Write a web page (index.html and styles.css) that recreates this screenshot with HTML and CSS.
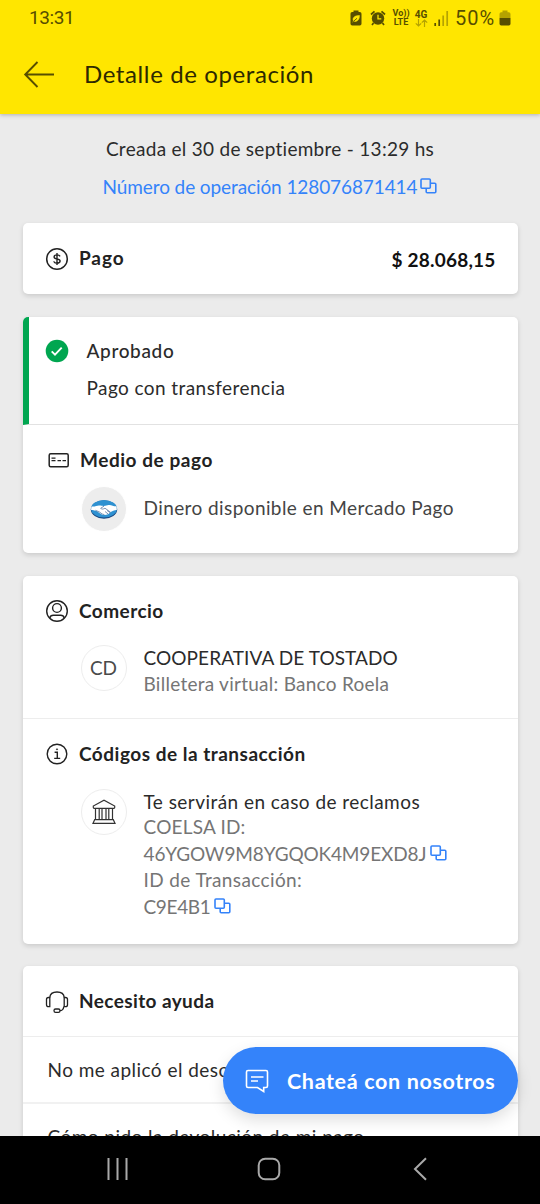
FILE: index.html
```html
<!DOCTYPE html>
<html lang="es">
<head>
<meta charset="utf-8">
<title>Detalle de operación</title>
<link rel="stylesheet" href="styles.css">
</head>
<body>
<svg class="defs" width="0" height="0" aria-hidden="true">
  <symbol id="copy" viewBox="0 0 17 16"><path d="M2 1h7.300q1 0 1 1v7.300q0 1-1 1H2q-1 0-1-1V2q0-1 1-1zM10.300 5.200h4.500q1 0 1 1v7.600q0 1-1 1H7.200q-1 0-1-1v-3.500" fill="none" stroke="currentColor" stroke-width="1.600"/></symbol>
</svg>
<div class="screen">
  <header class="header">
    <div class="status">
      <span class="clock">13:31</span>
      <div class="status-icons">
        <svg class="i-saver" width="12" height="16" viewBox="0 0 12 16"><path d="M3.500 0.500h5v1.600h1.300q1.700 0 1.700 1.700v10q0 1.700-1.700 1.700H2.200q-1.700 0-1.700-1.700v-10q0-1.700 1.700-1.700h1.300z" fill="#574e00"/><path d="M9.500 5.500c-4 0-6.500 1.500-6.500 4q0 2 2 2c2.800 0 4.500-2.500 4.500-6zM2.300 12.200l4-3.700" fill="#ffe600" stroke="#ffe600" stroke-width=".5"/><path d="M3.500 11.300l3.500-3" stroke="#574e00" stroke-width=".9"/></svg>
        <svg class="i-alarm" width="16" height="16" viewBox="0 0 16 16"><circle cx="8" cy="8.500" r="6.200" fill="#574e00"/><path d="M1 4.500L4.500 1.300M15 4.500L11.500 1.300M3.500 13l-1.500 2M12.500 13l1.500 2" stroke="#574e00" stroke-width="1.700"/><path d="M8 4.800v4h3.300" fill="none" stroke="#ffe600" stroke-width="1.300"/></svg>
        <div class="net i-volte"><span>Vo))</span><span>LTE</span></div>
        <div class="net i-4g"><span>4G</span><svg width="13" height="8" viewBox="0 0 13 8"><path d="M3.500 0v7M.8 4.300l2.700 2.700 2.700-2.700M9.500 8V1M6.800 3.700L9.500 1l2.700 2.700" fill="none" stroke="#b5a300" stroke-width="1.200"/></svg></div>
        <svg class="i-signal" width="15" height="15" viewBox="0 0 15 15"><path d="M1.200 12v3M5.200 8.500V15" stroke="#574e00" stroke-width="1.700"/><path d="M9.200 4.500V15M13.200 0v15" stroke="#b5a300" stroke-width="1.700"/></svg>
        <span class="percent">50%</span>
        <svg class="i-battery" width="12" height="16" viewBox="0 0 12 16"><path d="M3.500.5h5v1.700h1.300q1.700 0 1.700 1.700V8H.5V3.900q0-1.700 1.700-1.700h1.300z" fill="#b5a300"/><path d="M.5 8h11v5.800q0 1.700-1.700 1.700H2.200Q.5 15.500.5 13.800z" fill="#574e00"/></svg>
      </div>
    </div>
    <div class="titlebar">
      <svg class="back" width="32" height="28" viewBox="0 0 32 28"><path d="M14.500 2L2.200 14.500 14.500 27M2.200 14.500H31" fill="none" stroke="#574e00" stroke-width="1.900"/></svg>
      <h1>Detalle de operación</h1>
    </div>
  </header>

  <main class="content">
    <div class="intro">
      <p class="created">Creada el 30 de septiembre - 13:29 hs</p>
      <p class="number"><span>Número de operación 128076871414</span><svg class="copy" width="17" height="16"><use href="#copy"/></svg></p>
    </div>

    <section class="card payment">
      <svg class="icon" width="24" height="24" viewBox="0 0 24 24" fill="none" stroke="#222"><circle cx="12" cy="12" r="10.300" stroke-width="1.500"/><path d="M15.100 9.400c-.5-1-1.600-1.500-3.100-1.500-1.700 0-2.900.7-2.900 2 0 3 6 1.100 6 4.200 0 1.300-1.300 2.100-3.100 2.100-1.600 0-2.900-.6-3.300-1.800M12 6v12" stroke-width="1.400"/></svg>
      <h2 class="pago">Pago</h2>
      <strong class="amount">$ 28.068,15</strong>
    </section>

    <section class="card status-card">
      <div class="approved">
        <svg class="icon" width="24" height="24" viewBox="0 0 24 24"><circle cx="12" cy="12" r="11.300" fill="#00a650"/><path d="M6.700 12.300l3.300 3.300 6.700-6.900" fill="none" stroke="#fff" stroke-width="1.900"/></svg>
        <div class="approved-text">
          <p class="state">Aprobado</p>
          <p class="transfer">Pago con transferencia</p>
        </div>
      </div>
      <div class="method">
        <div class="heading">
          <svg class="icon" width="24" height="24" viewBox="0 0 24 24" fill="none" stroke="#222" stroke-width="1.500"><rect x="4.200" y="5.700" width="19" height="13" rx="1.500"/><path d="M6.500 10.100h4M6.500 12.700h4M12.500 12.700h3.500M17.500 12.700h3.500" stroke-width="1.300"/></svg>
          <h2 class="medio">Medio de pago</h2>
        </div>
        <div class="detail">
          <div class="avatar grey"><svg width="28" height="20" viewBox="0 0 28 20"><ellipse cx="14" cy="10.500" rx="13.200" ry="9.200" fill="#17457f"/><ellipse cx="14" cy="9.800" rx="12.900" ry="8.800" fill="#2e91d1"/><path d="M1.400 7.400c3 .6 5.300-.7 7.500-.9 2.200-.1 3.200.5 5 .4 2.100-.1 3.400-1.200 5.500-.9 2.500.4 4.700 1.600 7.200 1.300l.2 3.600c-2.600.4-4.800 1.100-6.200 2.100-1.500 2-3.300 3-6.200 3-3.200 0-4.600-2.100-7-3.500-1.900-1-4.100-1.500-6.300-1.500z" fill="#fff"/><path d="M14 7.200l-3.300 2c.6 1.400 2.500 1 4.300 0l5.500 4M12.500 15l2 .8M15 12.500l3 2.400M17 11.400l3 2.300M5.500 11.300l3.500 1.500M9 12.700l3.500 2.500" fill="none" stroke="#476a99" stroke-width=".7"/></svg></div>
          <p class="dinero">Dinero disponible en Mercado Pago</p>
        </div>
      </div>
    </section>

    <section class="card">
      <div class="store">
        <div class="heading">
          <svg class="icon" width="24" height="24" viewBox="0 0 24 24" fill="none" stroke="#222" stroke-width="1.400"><circle cx="12" cy="12" r="10.300"/><circle cx="12" cy="9" r="4.400"/><path d="M4.800 19c.4-1.800 1.500-2.700 3.500-2.700h7.400c2 0 3.100.9 3.500 2.700"/></svg>
          <h2 class="comercio">Comercio</h2>
        </div>
        <div class="detail">
          <div class="avatar">CD</div>
          <div class="store-text">
            <p class="coop">COOPERATIVA DE TOSTADO</p>
            <p class="muted wallet">Billetera virtual: Banco Roela</p>
          </div>
        </div>
      </div>
      <div class="codes">
        <div class="heading">
          <svg class="icon" width="24" height="24" viewBox="0 0 24 24" fill="none" stroke="#222" stroke-width="1.400"><circle cx="12" cy="12" r="9.800"/><path d="M9.600 10.200H12.300V16M9.200 16.400h6"/><circle cx="12" cy="7.300" r=".6" fill="#222" stroke-width=".7"/></svg>
          <h2 class="codigos">Códigos de la transacción</h2>
        </div>
        <div class="detail">
          <div class="avatar"><svg width="24" height="26" viewBox="0 0 24 26" fill="none" stroke="#333" stroke-width="1.200"><path d="M1.300 8.500V7L12 1.300 22.700 7v1.500q0 .8-.8.8H2.100q-.8 0-.8-.8zM3.500 9.300v11.400M7.200 9.300v11.400M10 9.300v11.400M14 9.300v11.400M16.800 9.300v11.400M20.500 9.300v11.400M2.700 20.700h18.600L23 24.300H1z"/></svg></div>
          <div class="codes-text">
            <p class="claims">Te servirán en caso de reclamos</p>
            <p class="muted coelsa">COELSA ID:</p>
            <p class="muted code"><span>46YGOW9M8YGQOK4M9EXD8J</span><svg class="copy" width="17" height="16"><use href="#copy"/></svg></p>
            <p class="muted trans">ID de Transacción:</p>
            <p class="muted short"><span>C9E4B1</span><svg class="copy" width="17" height="16"><use href="#copy"/></svg></p>
          </div>
        </div>
      </div>
    </section>

    <section class="card help">
      <div class="help-head">
        <svg class="icon" width="24" height="24" viewBox="0 0 24 24" fill="none" stroke="#222" stroke-width="1.300"><path d="M4.800 8.500C5 5 8 3 12 3s7 2 7.200 5.500M18.800 17.500c-.3 2.700-1.800 4.200-4 4.200"/><path d="M4.800 8.500v9.200H3.500q-2 0-2-2V10.500q0-2 2-2zM19.200 8.500v9.200h1.300q2 0 2-2V10.500q0-2-2-2z"/><rect x="9" y="20" width="6" height="3.300" rx="1.600"/></svg>
        <h2 class="ayuda">Necesito ayuda</h2>
      </div>
      <p class="question">No me aplicó el descuento</p>
      <p class="question">Cómo pido la devolución de mi pago</p>
    </section>
  </main>

  <div class="chat">
    <svg width="24" height="24" viewBox="0 0 24 24" fill="none" stroke="#fff" stroke-width="1.600"><path d="M3 1.500h18q1.500 0 1.500 1.500v14q0 1.500-1.500 1.500h-2.300v4l-6.200-4H3Q1.500 18.500 1.500 17V3Q1.500 1.500 3 1.500zM6 8h12.500M6 12h7"/></svg>
    <span>Chateá con nosotros</span>
  </div>

  <nav class="nav">
    <svg width="24" height="24" viewBox="0 0 24 24"><path d="M3.500 1v22M12.500 1v22M21.500 1v22" stroke="#a9a9a9" stroke-width="2"/></svg>
    <svg width="24" height="24" viewBox="0 0 24 24"><rect x="1.700" y="1.700" width="20.600" height="20.600" rx="6.500" fill="none" stroke="#a9a9a9" stroke-width="2"/></svg>
    <svg width="24" height="24" viewBox="0 0 24 24"><path d="M18 1.200L7 12l11 10.800" fill="none" stroke="#a9a9a9" stroke-width="2"/></svg>
  </nav>
</div>
</body>
</html>
```

FILE: styles.css
```css
* { box-sizing: border-box; margin: 0; padding: 0; }
body { background: #000; font-family: Lato, "Open Sans", sans-serif; font-size: 19px; line-height: 26px; color: #2b2b2b; }
svg { display: block; flex: none; }
.defs { position: absolute; }
p, h1, h2, span, strong { white-space: nowrap; }
.screen { position: relative; width: 540px; height: 1204px; overflow: hidden; display: flex; flex-direction: column; }

.header { flex: none; height: 114px; background: #ffe600; box-shadow: 0 1px 4px rgba(0,0,0,.25); z-index: 1; }
.status { height: 36px; padding: 0 29px 0 29px; display: flex; justify-content: space-between; align-items: center; color: #574e00; font-family: Roboto, sans-serif; }
.clock { font-size: 19px; font-weight: 400; letter-spacing: -.4px; }
.status-icons { display: flex; align-items: center; }
.i-alarm { margin-left: 8px; }
.net { display: flex; flex-direction: column; align-items: center; font-size: 9px; font-weight: 700; line-height: 9px; }
.i-volte { width: 16px; margin-left: 7px; }
.i-volte span { height: 9px; }
.i-4g { width: 14px; margin-left: 5px; font-size: 10px; }
.i-signal { margin-left: 6px; }
.percent { width: 44px; margin-left: 6px; font-size: 20px; font-weight: 400; letter-spacing: 1px; }
.i-battery { margin-left: 0; }
.titlebar { height: 75px; padding-left: 23px; display: flex; align-items: center; }
h1 { margin-left: 29px; font-size: 24px; font-weight: 400; letter-spacing: .6px; color: #2d2900; }

.content { flex: 1; min-height: 0; overflow: hidden; padding: 22px 22.500px 0 22.500px; background: #ebebeb; }
.intro { display: flex; flex-direction: column; align-items: center; gap: 12px; height: 87px; }
.created { letter-spacing: .28px; }
.number { display: flex; color: #3483fa; letter-spacing: -.1px; }
.copy { margin: 4px 0 0 4px; color: #3483fa; }
.number .copy { margin-left: 3px; }
.card { margin-bottom: 22px; border-radius: 5px; background: #fff; box-shadow: 0 2px 5px rgba(0,0,0,.14); }
h2 { margin-left: 10.500px; font-size: 19px; font-weight: 700; color: #222; }
.payment { height: 71px; margin-bottom: 23px; padding: 0 22px; display: flex; align-items: center; }
.pago { padding-bottom: 1px; letter-spacing: .9px; }
.amount { margin-left: auto; padding-top: 2px; color: #111; letter-spacing: .2px; }
.status-card { margin-bottom: 22.500px; }
.approved { height: 108px; padding: 21px 0 0 16px; display: flex; border-left: 6px solid #00a650; border-bottom: 1px solid #e2e2e2; border-top-left-radius: 5px; }
.approved .icon { margin-top: 1px; }
.approved-text { margin-left: 18px; display: flex; flex-direction: column; gap: 11px; }
.state { font-weight: 500; letter-spacing: .65px; }
.transfer { letter-spacing: .42px; }
.method { height: 128px; padding: 22px 22px 0; }
.heading { display: flex; align-items: center; }
.detail { display: flex; padding-left: 36px; }
.avatar { flex: none; width: 46px; height: 46px; margin-right: 17px; border: 1px solid #ededed; border-radius: 50%; display: flex; align-items: center; justify-content: center; color: #4a4a4a; }
.grey { border-color: #fff; background: #ededed; }
.method .detail { margin-top: 13px; align-items: center; }
.method h2 { margin-left: 11.500px; letter-spacing: .55px; }
.dinero { padding-bottom: 3px; color: #444; letter-spacing: .41px; }
.store { height: 143.500px; padding: 22px 22px 0; border-bottom: 1px solid #ededed; }
.comercio { letter-spacing: .45px; }
.store .detail { margin-top: 21px; }
.coop { letter-spacing: .09px; }
.wallet { letter-spacing: .26px; }
.muted { color: #757575; }
.codes { height: 224.500px; padding: 22px 22px 0; }
.codigos { letter-spacing: .5px; }
.codes .detail { margin-top: 21.500px; }
.codes-text p { height: 26.600px; line-height: 26.600px; }
.codes-text .claims { height: 25.800px; letter-spacing: .45px; }
.coelsa { letter-spacing: .2px; }
.code { letter-spacing: -.14px; }
.trans { letter-spacing: .38px; }
.short { letter-spacing: -.35px; }
.code, .short { display: flex; }
.help-head { height: 71.500px; padding: 0 22px; display: flex; align-items: center; border-bottom: 1px solid #ededed; }
.ayuda { letter-spacing: .4px; }
.question { height: 67px; padding-left: 25px; line-height: 65px; letter-spacing: .45px; border-bottom: 2px solid #f1f1f1; }

.chat { position: absolute; left: 222.500px; top: 1047px; width: 295px; height: 67px; padding-left: 22px; border-radius: 34px; background: #3483fa; box-shadow: 0 6px 16px rgba(0,0,0,.13); display: flex; align-items: center; color: #fff; font-size: 21.500px; font-weight: 700; letter-spacing: .65px; z-index: 2; }
.chat span { margin-left: 18.500px; }
.nav { flex: none; height: 68px; background: #000; display: flex; justify-content: space-between; align-items: center; padding: 0 108px 2px 105px; z-index: 1; }
```
